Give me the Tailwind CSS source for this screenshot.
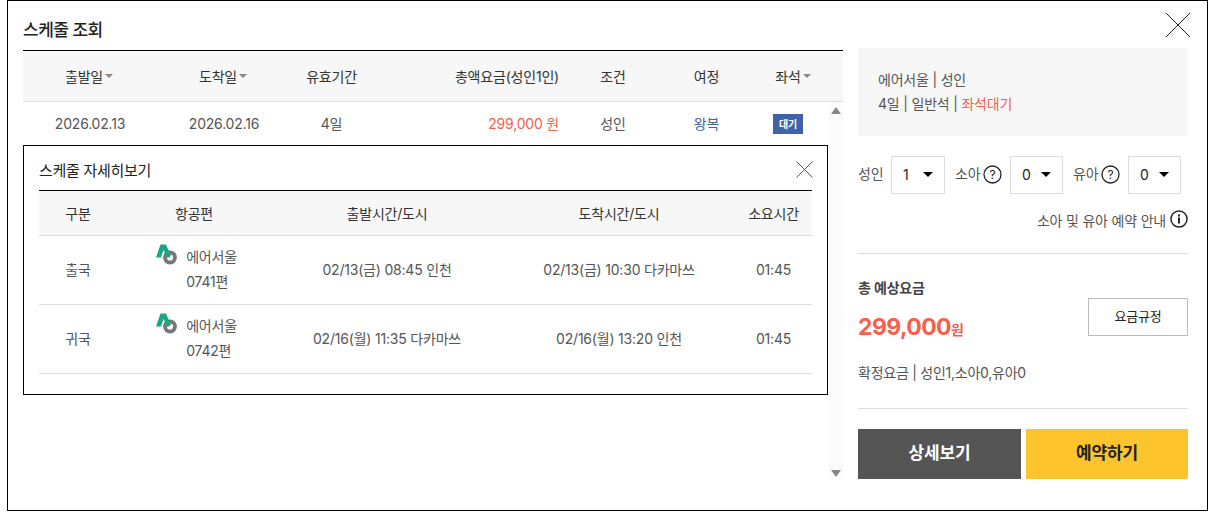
<!DOCTYPE html>
<html lang="ko">
<head>
  <meta charset="UTF-8" />
  <title>스케줄 조회</title>
  <script src="https://cdn.jsdelivr.net/npm/@tailwindcss/browser@4"></script>
</head>
<body class="bg-white font-['Inter','Noto_Sans_CJK_KR',sans-serif] text-[14px] text-[#555] tracking-[-0.2px]">

  <!-- Modal -->
  <div class="relative ml-[7px] w-[1201px] h-[511px] border border-black flex pl-[15px]">

    <!-- Close -->
    <svg class="absolute left-[1157px] top-[11px]" width="26" height="26" viewBox="0 0 26 26" fill="none" stroke="#222" stroke-width="1"><path d="M1 1L25 25M25 1L1 25" /></svg>

    <!-- Left column -->
    <div class="relative w-[820px] shrink-0">
      <h1 class="h-[49px] pt-[17px] text-[17px] leading-6 font-medium text-[#222] tracking-[-0.5px]">스케줄 조회</h1>

      <!-- Schedule table -->
      <div class="flex items-center h-[52px] border-t border-b border-t-black border-b-[#ddd] bg-[#f7f7f7] text-[#333]">
        <div class="w-[134px] pr-[2px] flex justify-center items-center gap-[2px]">출발일<span class="border-x-[4px] border-x-transparent border-t-[4px] border-t-[#888]"></span></div>
        <div class="w-[134px] pr-[2px] flex justify-center items-center gap-[2px]">도착일<span class="border-x-[4px] border-x-transparent border-t-[4px] border-t-[#888]"></span></div>
        <div class="w-[81px] text-center">유효기간</div>
        <div class="w-[207px] pr-[20px] text-right">총액요금(성인1인)</div>
        <div class="w-[68px] text-center">조건</div>
        <div class="w-[119px] text-center">여정</div>
        <div class="w-[54px] flex justify-center items-center gap-[2px]">좌석<span class="border-x-[4px] border-x-transparent border-t-[4px] border-t-[#888]"></span></div>
      </div>
      <div class="flex items-center h-[43px]">
        <div class="w-[134px] text-center">2026.02.13</div>
        <div class="w-[134px] text-center">2026.02.16</div>
        <div class="w-[81px] text-center">4일</div>
        <div class="w-[207px] pr-[20px] text-right text-[#f4604c]">299,000 원</div>
        <div class="w-[68px] text-center">성인</div>
        <div class="w-[119px] text-center text-[#46659f]">왕복</div>
        <div class="w-[54px] pl-[7px]"><span class="block w-[30px] h-[20px] bg-[#3f62a8] text-white text-[10px] leading-[20px] font-bold text-center">대기</span></div>
      </div>

      <!-- Scroll track -->
      <div class="absolute left-[806px] top-[101px] w-[14px] h-[378px] bg-[#fbfbfb] flex flex-col justify-between items-center pt-[5px] pb-[3px]">
        <span class="border-x-[5px] border-x-transparent border-b-[7px] border-b-[#888]"></span>
        <span class="border-x-[5px] border-x-transparent border-t-[7px] border-t-[#888]"></span>
      </div>

      <!-- Detail popup -->
      <div class="absolute left-0 top-[144px] w-[805px] h-[250px] border border-black bg-white px-[15px]">
        <svg class="absolute left-[772px] top-[15px]" width="17" height="17" viewBox="0 0 17 17" fill="none" stroke="#555" stroke-width="1"><path d="M0.5 0.5L16.5 16.5M16.5 0.5L0.5 16.5" /></svg>
        <h2 class="h-[44px] pt-[15px] text-[15px] leading-5 text-[#222] tracking-[-0.3px]">스케줄 자세히보기</h2>
        <div class="flex items-center h-[46px] border-t border-b border-t-black border-b-[#ddd] bg-[#f7f7f7] text-[#333] text-center">
          <div class="w-[78px]">구분</div>
          <div class="w-[154px]">항공편</div>
          <div class="w-[232px]">출발시간/도시</div>
          <div class="w-[232px]">도착시간/도시</div>
          <div class="w-[77px]">소요시간</div>
        </div>
        <div class="flex items-center h-[69px] pb-[2px] border-b border-[#ddd] text-center">
          <div class="w-[78px]">출국</div>
          <div class="w-[154px] pl-[5px] flex justify-center">
            <div class="flex gap-[8px] text-left leading-[25px]">
              <svg width="22" height="22" viewBox="0 0 22 22" fill="none"><circle cx="14" cy="13.5" r="5" stroke="#777" stroke-width="3.8" /><path d="M0 13.5L4.5 0.5H10L15 12L11.5 14L7.5 6L5 13.5Z" fill="#1aa584" /></svg>
              <div>에어서울<br />0741편</div>
            </div>
          </div>
          <div class="w-[232px]">02/13(금) 08:45 인천</div>
          <div class="w-[232px]">02/13(금) 10:30 다카마쓰</div>
          <div class="w-[77px]">01:45</div>
        </div>
        <div class="flex items-center h-[69px] pb-[2px] border-b border-[#ddd] text-center">
          <div class="w-[78px]">귀국</div>
          <div class="w-[154px] pl-[5px] flex justify-center">
            <div class="flex gap-[8px] text-left leading-[25px]">
              <svg width="22" height="22" viewBox="0 0 22 22" fill="none"><circle cx="14" cy="13.5" r="5" stroke="#777" stroke-width="3.8" /><path d="M0 13.5L4.5 0.5H10L15 12L11.5 14L7.5 6L5 13.5Z" fill="#1aa584" /></svg>
              <div>에어서울<br />0742편</div>
            </div>
          </div>
          <div class="w-[232px]">02/16(월) 11:35 다카마쓰</div>
          <div class="w-[232px]">02/16(월) 13:20 인천</div>
          <div class="w-[77px]">01:45</div>
        </div>
      </div>
    </div>

    <!-- Right column -->
    <div class="w-[330px] ml-[15px] pt-[47px] shrink-0">
      <div class="h-[88px] bg-[#f7f7f7] px-[20px] pt-[20px] leading-[24px]">
        <div>에어서울 | 성인</div>
        <div>4일 | 일반석 | <span class="text-[#f4604c]">좌석대기</span></div>
      </div>

      <div class="flex items-center mt-[20px] h-[38px]">
        <span class="w-[33px] mb-[4px]">성인</span>
        <div class="w-[54px] h-[38px] pb-[2px] border border-[#ddd] flex items-center justify-between px-[11px] text-[#222]">1<span class="border-x-[5px] border-x-transparent border-t-[5px] border-t-black"></span></div>
        <div class="w-[65px] pl-[10px] flex items-center gap-[3px]">
          <span class="mb-[4px]">소아</span>
          <svg class="mb-[2px]" width="19" height="19" viewBox="0 0 19 19" fill="none"><circle cx="9.5" cy="9.5" r="8.5" stroke="#222" stroke-width="1.3" /><text x="9.5" y="14" text-anchor="middle" font-size="12" fill="#222">?</text></svg>
        </div>
        <div class="w-[53px] h-[38px] pb-[2px] border border-[#ddd] flex items-center justify-between px-[11px] text-[#222]">0<span class="border-x-[5px] border-x-transparent border-t-[5px] border-t-black"></span></div>
        <div class="w-[65px] pl-[10px] flex items-center gap-[3px]">
          <span class="mb-[4px]">유아</span>
          <svg class="mb-[2px]" width="19" height="19" viewBox="0 0 19 19" fill="none"><circle cx="9.5" cy="9.5" r="8.5" stroke="#222" stroke-width="1.3" /><text x="9.5" y="14" text-anchor="middle" font-size="12" fill="#222">?</text></svg>
        </div>
        <div class="w-[53px] h-[38px] pb-[2px] border border-[#ddd] flex items-center justify-between px-[11px] text-[#222]">0<span class="border-x-[5px] border-x-transparent border-t-[5px] border-t-black"></span></div>
      </div>

      <div class="flex justify-end items-center gap-[4px] mt-[15px] h-[20px] pt-[1px]">
        <span class="mt-[1px]">소아 및 유아 예약 안내</span>
        <svg class="mb-[2px]" width="18" height="18" viewBox="0 0 18 18" fill="none"><circle cx="9" cy="9" r="8" stroke="#222" stroke-width="1.5" /><rect x="8" y="7.5" width="2" height="6" fill="#222" /><rect x="8" y="4.5" width="2" height="2" fill="#222" /></svg>
      </div>

      <div class="mt-[24px] border-t border-[#ddd] pt-[24px] relative h-[155px]">
        <div class="font-semibold text-[#444] text-[14px] leading-5">총 예상요금</div>
        <div class="mt-[13px] font-bold text-[#f4604c] text-[23px] leading-[32px] tracking-[-0.6px]">299,000<span class="text-[14px]">원</span></div>
        <div class="mt-[17px] leading-5 tracking-[-0.25px]">확정요금 | 성인1,소아0,유아0</div>
        <button class="absolute right-0 top-[44px] w-[100px] h-[38px] border border-[#bbb] text-[13px] text-[#222]">요금규정</button>
      </div>

      <div class="flex gap-[5px] border-t border-[#ddd] pt-[20px]">
        <button class="w-[163px] h-[50px] bg-[#555] text-white text-[17px] font-semibold">상세보기</button>
        <button class="w-[162px] h-[50px] bg-[#fec42d] text-[#222] text-[17px] font-semibold">예약하기</button>
      </div>
    </div>
  </div>

</body>
</html>
